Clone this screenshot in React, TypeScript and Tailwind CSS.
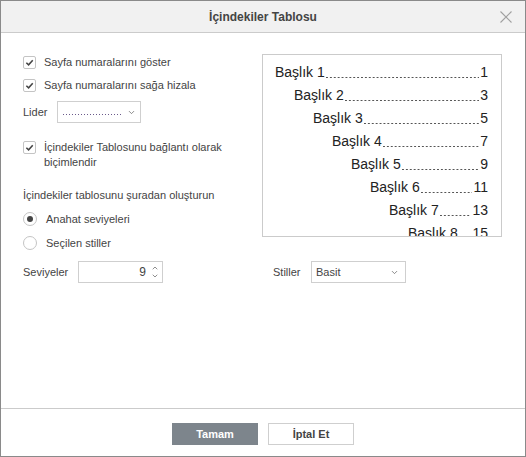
import { ChevronDown, ChevronUp } from 'lucide-react';

const headings = [
  { label: 'Başlık 1', page: '1' },
  { label: 'Başlık 2', page: '3' },
  { label: 'Başlık 3', page: '5' },
  { label: 'Başlık 4', page: '7' },
  { label: 'Başlık 5', page: '9' },
  { label: 'Başlık 6', page: '11' },
  { label: 'Başlık 7', page: '13' },
  { label: 'Başlık 8', page: '15' },
];

const indents = ['pl-0', 'pl-[19px]', 'pl-[38px]', 'pl-[57px]', 'pl-[76px]', 'pl-[95px]', 'pl-[114px]', 'pl-[133px]'];

function Check() {
  return (
    <span className="flex h-[13px] w-[13px] shrink-0 items-center justify-center rounded-[2px] border border-[#c4c4c4] bg-white">
      <svg viewBox="0 0 10 10" className="h-[9px] w-[9px]">
        <path d="M1.5 5.2 L4 7.6 L8.6 2.4" fill="none" stroke="#444" strokeWidth="1.7" />
      </svg>
    </span>
  );
}

function Radio({ on }: { on?: boolean }) {
  return (
    <span className="flex h-[14px] w-[14px] shrink-0 items-center justify-center rounded-full border border-[#c4c4c4] bg-white">
      {on && <span className="h-[6px] w-[6px] rounded-full bg-[#444]" />}
    </span>
  );
}

export default function App() {
  return (
    <div className="flex h-[457px] w-[526px] flex-col border border-[#8a8a8a] bg-white font-['Liberation_Sans',Arial,sans-serif] text-[11px] text-[#444]">
      <header className="relative flex h-[32px] shrink-0 items-center justify-center border-b border-[#cbcbcb] bg-[#f1f1f1]">
        <span className="text-[12px] font-bold text-[#444]">İçindekiler Tablosu</span>
        <svg viewBox="0 0 12 12" className="absolute right-[13px] top-[10px] h-[12px] w-[12px]">
          <path d="M0.5 0.5 L11.5 11.5 M11.5 0.5 L0.5 11.5" stroke="#a0a0a0" strokeWidth="1.1" />
        </svg>
      </header>

      <main className="flex-1 pl-[22px] pr-[23px] pt-[18px]">
        <div className="flex">
          <div className="w-[239px]">
            <label className="flex h-[23px] items-center gap-[8px]">
              <Check />
              <span>Sayfa numaralarını göster</span>
            </label>
            <label className="flex h-[23px] items-center gap-[8px]">
              <Check />
              <span>Sayfa numaralarını sağa hizala</span>
            </label>
            <div className="mt-[4px] flex h-[22px] items-center">
              <span className="w-[34px]">Lider</span>
              <div className="flex h-[22px] w-[84px] items-center justify-between border border-[#cfcfcf] pl-[5px] pr-[4px]">
                <span className="mb-[7px] h-[1px] w-[60px] self-end bg-[linear-gradient(to_right,#6a5a8a_1px,transparent_1px)] bg-[length:3px_1px] bg-repeat-x" />
                <ChevronDown className="h-[9px] w-[9px] text-[#666]" strokeWidth={2} />
              </div>
            </div>
            <label className="mt-[17px] flex items-start gap-[8px]">
              <span className="pt-[1px]">
                <Check />
              </span>
              <span className="leading-[15px]">
                İçindekiler Tablosunu bağlantı olarak
                <br />
                biçimlendir
              </span>
            </label>
            <div className="mt-[18px] leading-[15px]">İçindekiler tablosunu şuradan oluşturun</div>
            <label className="mt-[4px] flex h-[24px] items-center gap-[9px]">
              <Radio on />
              <span>Anahat seviyeleri</span>
            </label>
            <label className="flex h-[24px] items-center gap-[9px]">
              <Radio />
              <span>Seçilen stiller</span>
            </label>
          </div>

          <div className="mt-[3px] h-[183px] flex-1 overflow-hidden border border-[#cbcbcb] pl-[12px] pr-[13px] pt-[6px] text-[14px] text-[#222]">
            {headings.map((h, i) => (
              <div key={h.label} className={`flex h-[23px] items-center whitespace-nowrap ${indents[i]}`}>
                <span>{h.label}</span>
                <span className="mx-[1px] mb-[6px] h-[1.5px] min-w-0 flex-1 self-end bg-[linear-gradient(to_right,#555_1.5px,transparent_1.5px)] bg-[length:3.9px_1.5px] bg-repeat-x" />
                <span>{h.page}</span>
              </div>
            ))}
          </div>
        </div>

        <div className="mt-[6px] flex h-[22px] items-center">
          <span className="w-[55px]">Seviyeler</span>
          <div className="flex h-[22px] w-[85px] items-center justify-end border border-[#cfcfcf] pr-[3px]">
            <span className="mr-[5px] text-[12px]">9</span>
            <div className="flex flex-col">
              <ChevronUp className="h-[8px] w-[8px] text-[#666]" strokeWidth={2.2} />
              <ChevronDown className="h-[8px] w-[8px] text-[#666]" strokeWidth={2.2} />
            </div>
          </div>
          <span className="ml-[110px] w-[38px]">Stiller</span>
          <div className="flex h-[22px] w-[95px] items-center justify-between border border-[#cfcfcf] pl-[4px] pr-[6px]">
            <span>Basit</span>
            <ChevronDown className="h-[9px] w-[9px] text-[#666]" strokeWidth={2} />
          </div>
        </div>
      </main>

      <footer className="flex h-[48px] shrink-0 justify-center gap-[10px] border-t border-[#cbcbcb] pt-[14px]">
        <button className="h-[22px] w-[86px] bg-[#7d858c] text-[11px] font-bold text-white">Tamam</button>
        <button className="h-[22px] w-[86px] border border-[#cfcfcf] bg-white text-[11px] font-bold text-[#444]">İptal Et</button>
      </footer>
    </div>
  );
}
